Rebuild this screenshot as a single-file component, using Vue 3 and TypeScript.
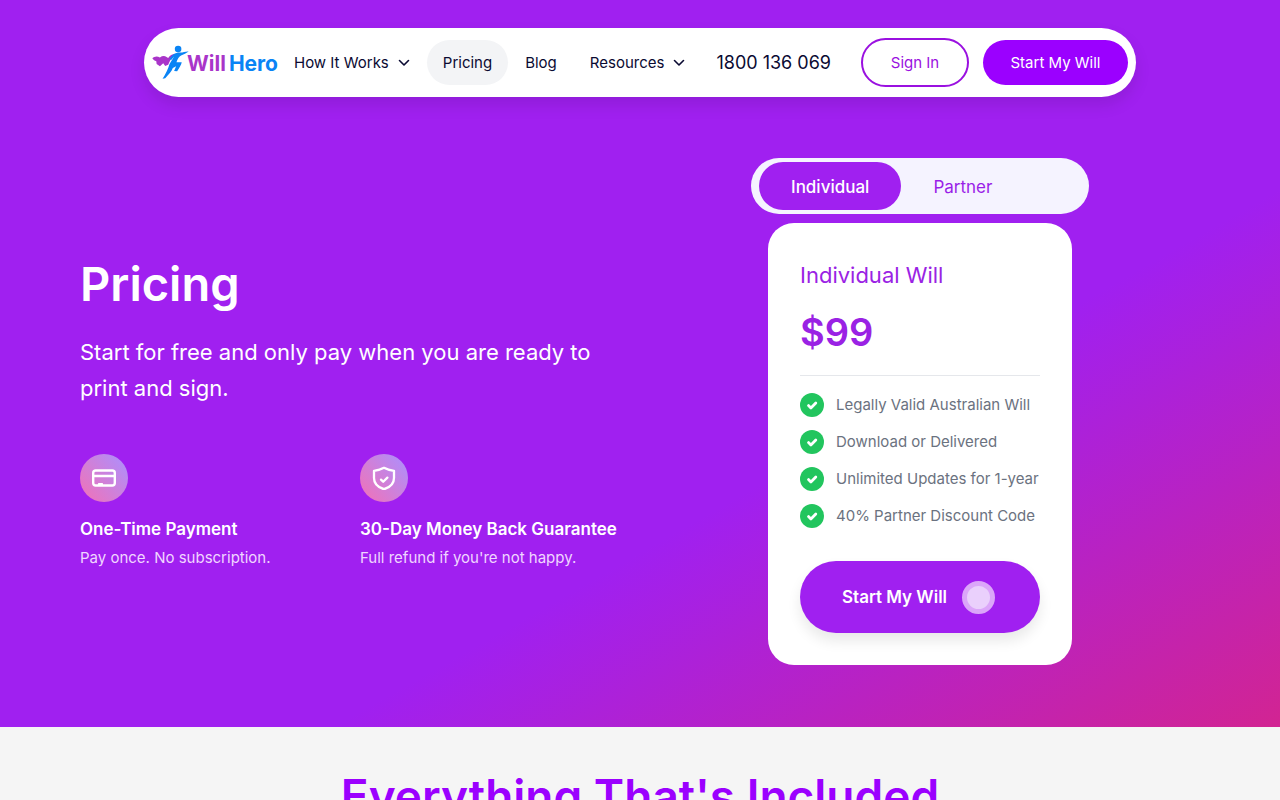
<script setup lang="ts">
import { ref } from 'vue'

interface NavItem {
  label: string
  menu: boolean
  active: boolean
}

const navItems: NavItem[] = [
  { label: 'How It Works', menu: true, active: false },
  { label: 'Pricing', menu: false, active: true },
  { label: 'Blog', menu: false, active: false },
  { label: 'Resources', menu: true, active: false },
]

const plans: string[] = ['Individual', 'Partner']
const selected = ref<string>('Individual')

const included: string[] = [
  'Legally Valid Australian Will',
  'Download or Delivered',
  'Unlimited Updates for 1-year',
  '40% Partner Discount Code',
]
</script>

<template>
  <div class="page">
    <div class="hero">
      <header class="bar">
        <a class="logo" href="#" aria-label="Will Hero">
          <svg class="mark" viewBox="36 75 112 105" aria-hidden="true">
            <path
              fill="#a935c9"
              d="M37 115 C43 109 51 107 60 112 C67 107 74 106 80 111 L85 114 C90 106 97 102 106 101 C97 108 92 119 85 134 L76 138 L70 130 L60 139 L50 132 L49 124 C44 123 40 120 37 115 Z"
            />
            <circle cx="115" cy="87" r="10" fill="#0a84f5" />
            <path
              fill="#0a84f5"
              d="M147 94 C137 93 129 98 119 97 C106 98 96 104 89 118 L94 120 L103 109 L89 132 C85 147 77 163 68 177 L76 175 C86 164 96 155 99 144 L109 139 L103 153 L112 154 C118 145 125 135 126 127 L110 127 C113 117 118 109 124 106 C132 103 140 99 147 94 Z"
            />
          </svg>
          <span class="word"><span class="will">Will</span><span class="hero-word">Hero</span></span>
        </a>
        <nav class="nav">
          <template v-for="item in navItems" :key="item.label">
            <button v-if="item.menu" type="button" class="nav-item">
              {{ item.label }}
              <svg class="chevron" viewBox="0 0 12 8" aria-hidden="true">
                <path d="M1.500 1.500 6 6l4.500-4.500" fill="none" stroke="currentColor" stroke-width="1.600" stroke-linecap="round" stroke-linejoin="round" />
              </svg>
            </button>
            <a v-else href="#" class="nav-item" :class="{ active: item.active }">{{ item.label }}</a>
          </template>
        </nav>
        <div class="actions">
          <a class="phone" href="tel:1800136069">1800 136 069</a>
          <a class="sign-in" href="#">Sign In</a>
          <a class="start" href="#">Start My Will</a>
        </div>
      </header>

      <main class="content">
        <section class="intro">
          <h1>Pricing</h1>
          <p class="lead">Start for free and only pay when you are ready to print and sign.</p>
          <div class="features">
            <div class="feature">
              <span class="badge">
                <svg viewBox="0 0 24 24" aria-hidden="true" fill="none" stroke="#fff" stroke-width="2.400" stroke-linecap="round" stroke-linejoin="round">
                  <rect x="1.200" y="4.500" width="21.600" height="15" rx="2.500" />
                  <path d="M1.200 10h21.600M7 18.300h3" />
                </svg>
              </span>
              <h2>One-Time Payment</h2>
              <p>Pay once. No subscription.</p>
            </div>
            <div class="feature">
              <span class="badge">
                <svg viewBox="0 0 24 24" aria-hidden="true" fill="none" stroke="#fff" stroke-width="2.300" stroke-linecap="round" stroke-linejoin="round">
                  <path d="M12 1.800c3 1.700 6.500 2.600 10 3v7.200c0 5.500-4.500 9.500-10 11.200-5.500-1.700-10-5.700-10-11.200V4.800c3.500-.4 7-1.300 10-3z" />
                  <path d="M9 13.600l2.200 2.200 4.200-4.200" />
                </svg>
              </span>
              <h2>30-Day Money Back Guarantee</h2>
              <p>Full refund if you're not happy.</p>
            </div>
          </div>
        </section>

        <section class="pricing">
          <div class="tabs" role="tablist">
            <button
              v-for="plan in plans"
              :key="plan"
              type="button"
              role="tab"
              class="tab"
              :class="{ on: plan === selected }"
              :aria-selected="plan === selected"
              @click="selected = plan"
            >
              {{ plan }}
            </button>
          </div>
          <div class="card">
            <h2>Individual Will</h2>
            <p class="price">$99</p>
            <ul>
              <li v-for="line in included" :key="line">
                <svg viewBox="0 0 24 24" aria-hidden="true">
                  <circle cx="12" cy="12" r="12" fill="#22c55e" />
                  <path d="M8.500 12.600l2.400 2.300 4.900-4.900" fill="none" stroke="#fff" stroke-width="2.800" stroke-linecap="round" stroke-linejoin="round" />
                </svg>
                {{ line }}
              </li>
            </ul>
            <a class="cta" href="#">Start My Will<span class="dot"></span></a>
          </div>
        </section>
      </main>
    </div>

    <section class="next">
      <h2>Everything That's Included</h2>
    </section>
  </div>
</template>

<style>
body {
  margin: 0;
}
</style>

<style scoped>
.page {
  height: 100vh;
  overflow: hidden;
  background: #f5f5f5;
  font-family: Inter, "Liberation Sans", sans-serif;
  font-size: 15px;
  line-height: 24px;
  color: #0a0a32;
}

.page * {
  box-sizing: border-box;
}

h1,
h2,
p,
ul {
  margin: 0;
  padding: 0;
}

a {
  color: inherit;
  text-decoration: none;
}

button {
  margin: 0;
  border: 0;
  background: none;
  font: inherit;
  color: inherit;
  cursor: pointer;
}

.hero {
  padding: 28px 80px 62px;
  background: linear-gradient(to bottom right, #a020f0 63%, #d22492 100%);
}

.bar {
  display: flex;
  align-items: center;
  max-width: 992px;
  height: 69px;
  margin: 0 auto 61px;
  padding: 0 8px;
  border-radius: 35px;
  background: #fff;
  box-shadow: 0 8px 16px rgba(0, 0, 0, 0.1);
}

.logo {
  display: flex;
  align-items: center;
  width: 126px;
}

.mark {
  flex: none;
  width: 37px;
  height: 35px;
}

.word {
  display: flex;
  gap: 3px;
  margin-left: -2px;
  padding-top: 2px;
  font-size: 21px;
  font-weight: 700;
}

.will {
  color: #a935c9;
}

.hero-word {
  color: #0a84f5;
}

.nav {
  display: flex;
  align-items: center;
  gap: 1px;
}

.nav-item {
  display: flex;
  align-items: center;
  gap: 9px;
  height: 45px;
  padding: 0 16px;
  border-radius: 23px;
  white-space: nowrap;
}

.active {
  background: #f3f4f6;
}

.chevron {
  width: 12px;
  height: 8px;
}

.actions {
  display: flex;
  flex: 1;
  align-items: center;
  justify-content: flex-end;
  gap: 14px;
}

.phone {
  margin-right: 16px;
  font-size: 18px;
  white-space: nowrap;
}

.sign-in {
  display: flex;
  align-items: center;
  justify-content: center;
  width: 108px;
  height: 49px;
  border: 2px solid #9a10e0;
  border-radius: 25px;
  color: #9a10e0;
}

.start {
  display: flex;
  align-items: center;
  justify-content: center;
  width: 145px;
  height: 45px;
  border-radius: 23px;
  background: #9b00ff;
  color: #fff;
}

.content {
  display: grid;
  grid-template-columns: 1fr 1fr;
  align-items: center;
  max-width: 1120px;
  margin: 0 auto;
}

.intro {
  padding-top: 2px;
  color: #fff;
}

h1 {
  font-size: 47px;
  font-weight: 600;
  line-height: 60px;
}

.lead {
  max-width: 544px;
  margin-top: 20px;
  font-size: 22px;
  line-height: 36px;
}

.features {
  display: grid;
  grid-template-columns: 1fr 1fr;
  margin-top: 48px;
}

.badge {
  display: flex;
  align-items: center;
  justify-content: center;
  width: 48px;
  height: 48px;
  border-radius: 50%;
  background: linear-gradient(50deg, #ec74bc 10%, #b48cf5 85%);
}

.badge svg {
  width: 24px;
  height: 24px;
}

.feature h2 {
  margin-top: 12px;
  font-size: 17px;
  font-weight: 600;
  line-height: 30px;
  white-space: nowrap;
}

.feature p {
  line-height: 28px;
  color: #f0d6ff;
}

.pricing {
  display: flex;
  flex-direction: column;
  align-items: center;
  gap: 9px;
}

.tabs {
  display: flex;
  width: 338px;
  padding: 4px 8px;
  border-radius: 28px;
  background: #f5f3ff;
}

.tab {
  height: 48px;
  padding: 2px 32px 0;
  border-radius: 24px;
  font-size: 17px;
  color: #9a1ee8;
}

.tab.on {
  background: #a020f0;
  color: #fff;
  font-weight: 500;
}

.card {
  width: 304px;
  padding: 32px;
  border-radius: 26px;
  background: #fff;
}

.card h2 {
  font-size: 22px;
  font-weight: 400;
  line-height: 40px;
  color: #9a22e4;
}

.price {
  padding: 11px 0 17px;
  border-bottom: 1px solid #e5e7eb;
  font-size: 38px;
  font-weight: 600;
  line-height: 52px;
  color: #9a22e4;
}

ul {
  display: grid;
  gap: 13px;
  padding: 17px 0 33px;
  list-style: none;
}

li {
  display: flex;
  align-items: center;
  gap: 12px;
  color: #6b7280;
  white-space: nowrap;
}

li svg {
  flex: none;
  width: 24px;
  height: 24px;
}

.cta {
  display: flex;
  align-items: center;
  gap: 15px;
  height: 72px;
  padding-left: 42px;
  border-radius: 36px;
  background: #a020f0;
  box-shadow: 0 8px 14px rgba(0, 0, 0, 0.09);
  font-size: 17px;
  font-weight: 600;
  color: #fff;
  white-space: nowrap;
}

.dot {
  width: 33px;
  height: 33px;
  border: 5px solid #dba6f9;
  border-radius: 50%;
  background: #ead0fc;
}

.next {
  padding: 39px 80px;
  text-align: center;
}

.next h2 {
  font-size: 46px;
  font-weight: 600;
  line-height: 60px;
  color: #9b00ff;
}
</style>
